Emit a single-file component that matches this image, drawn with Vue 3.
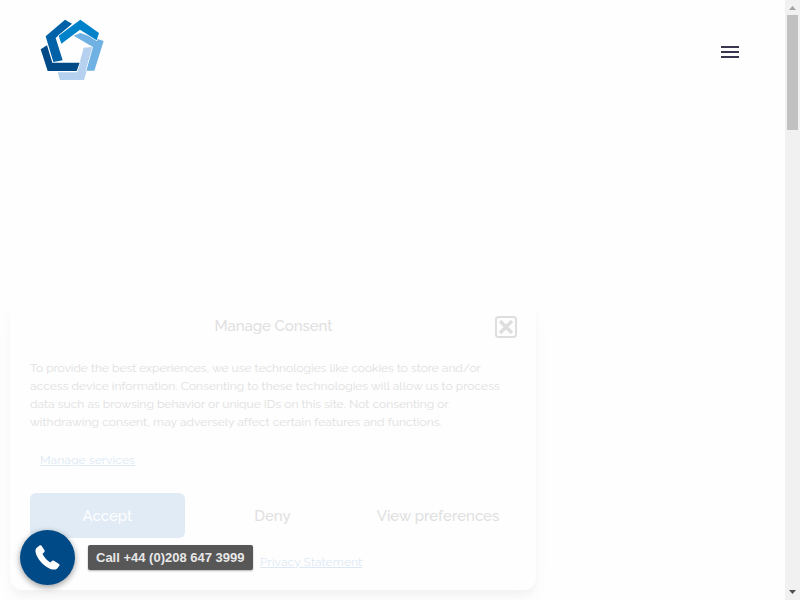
<template>
  <div class="page">
    <div class="content">
      <header class="header">
        <svg class="logo" viewBox="30 24 195 192" width="65" height="64">
          <polygon fill="#b5d1ef" points="161,113 192,110 162,210 90,210 83,187 141,187" />
          <polygon fill="#6fb1e2" stroke="#fefefe" stroke-width="4" paint-order="stroke" points="131,77 151,69 221,93 193,182 169,182 189,111" />
          <polygon fill="#0061a8" points="47,79 105,29 126,41 77,84 98,151 70,156" />
          <polygon fill="#004b87" stroke="#fefefe" stroke-width="4" paint-order="stroke" points="32,118 51,106 67,158 149,158 140,183 53,183" />
          <polygon fill="#0082ca" stroke="#fefefe" stroke-width="4" paint-order="stroke" points="86,77 151,29 207,69 200,91 150,59 94,101" />
        </svg>
        <button class="menu" aria-label="Menu">
          <span></span>
          <span></span>
          <span></span>
        </button>
      </header>

      <section class="consent">
        <div class="consent-head">
          <h2>Manage Consent</h2>
          <svg class="close" viewBox="0 0 22 22" width="22" height="22">
            <rect x="1" y="1" width="20" height="20" rx="2.5" />
            <path d="M5 5L17 17M17 5L5 17" />
          </svg>
        </div>
        <p class="message">
          <span v-for="(line, i) in lines" :key="i" :class="'line-' + (i + 1)">{{ line }}</span>
        </p>
        <a class="link services">Manage services</a>
        <div class="buttons">
          <button class="btn accept">Accept</button>
          <button class="btn deny">Deny</button>
          <button class="btn prefs">View preferences</button>
        </div>
        <div class="documents">
          <a class="link privacy">Privacy Statement</a>
        </div>
      </section>

      <div class="call">
        <div class="call-button">
          <svg viewBox="0 0 24 24" width="25" height="25">
            <path d="M1.4 2.8L4.7 .3Q5.6 -.2 6.3 .8L9.1 5.1Q9.7 6.1 8.8 6.9L7.2 8.3Q9.5 13.5 14.8 16.7L16.5 15.2Q17.3 14.5 18.2 15.2L23 18.3Q23.9 18.9 23.4 19.9L21.1 22.8Q18.7 24.5 14.3 22.7C7.2 19.5 1.5 12.5 .5 6.5Q.2 4.1 1.4 2.8Z" />
          </svg>
        </div>
        <span class="call-label">Call +44 (0)208 647 3999</span>
      </div>
    </div>

    <div class="scrollbar">
      <svg viewBox="0 0 15 15" width="15" height="15">
        <path fill="#a3a3a3" d="M4 10L7.5 6L11 10Z" />
      </svg>
      <div class="thumb"></div>
      <svg class="down" viewBox="0 0 15 15" width="15" height="15">
        <path fill="#505050" d="M4 5L11 5L7.5 9Z" />
      </svg>
    </div>
  </div>
</template>

<script setup>
const lines = [
  'To provide the best experiences, we use technologies like cookies to store and/or',
  'access device information. Consenting to these technologies will allow us to process',
  'data such as browsing behavior or unique IDs on this site. Not consenting or',
  'withdrawing consent, may adversely affect certain features and functions.'
]
</script>

<style>
body {
  overflow: hidden;
}
</style>

<style scoped>
.page {
  display: flex;
  width: 800px;
  height: 600px;
  overflow: hidden;
  background: #fefefe;
  font-family: Raleway, Lato, sans-serif;
}

.content {
  position: relative;
  flex: 1;
  overflow: hidden;
}

.header {
  display: flex;
  justify-content: space-between;
  align-items: flex-start;
  padding: 18px 46px 0 40px;
}

.menu {
  display: flex;
  flex-direction: column;
  gap: 3px;
  margin-top: 28px;
  padding: 0;
  border: 0;
  background: none;
}

.menu span {
  width: 18px;
  height: 2px;
  background: #393750;
}

.consent {
  position: absolute;
  left: 10px;
  top: 300px;
  box-sizing: border-box;
  width: 526px;
  height: 290px;
  padding: 16px 19px 16px 20px;
  border-radius: 12px;
  background: #fefefe;
  box-shadow: 0 10px 20px rgba(0, 0, 0, 0.023), 0 6px 6px rgba(0, 0, 0, 0.028);
}

.consent-head {
  display: grid;
  grid-template-columns: 22px 1fr 22px;
  align-items: center;
  height: 22px;
}

.consent-head h2 {
  grid-column: 2;
  margin: -2px 0 0;
  color: #e0e0e0;
  font-size: 15px;
  font-weight: 500;
  line-height: 20px;
  text-align: center;
  letter-spacing: -0.06px;
}

.close {
  fill: none;
  stroke: #dedede;
  stroke-width: 2;
}

.close path {
  stroke-width: 3.5;
}

.message {
  margin: 21px 0 0;
  color: #e0e0e0;
  font-size: 12px;
  line-height: 18px;
}

.message span {
  display: block;
  white-space: nowrap;
}

.line-1 {
  letter-spacing: -0.015px;
}

.line-2 {
  letter-spacing: 0.04px;
}

.line-3 {
  letter-spacing: 0.025px;
}

.line-4 {
  letter-spacing: 0.075px;
}

.link {
  color: #dce9f5;
  font-size: 12px;
  line-height: 18px;
  text-decoration: underline;
  letter-spacing: 0.1px;
}

.services {
  display: block;
  width: max-content;
  margin: 20px 0 0 10px;
}

.buttons {
  display: grid;
  grid-template-columns: repeat(3, 155px);
  gap: 10px;
  margin-top: 24px;
}

.btn {
  height: 45px;
  padding: 0;
  border: 0;
  border-radius: 6px;
  background: #fefefe;
  color: #e0e0e0;
  font-family: inherit;
  font-size: 15px;
  font-weight: 500;
}

.accept {
  background: #e0ebf5;
  color: #fefefe;
}

.prefs {
  padding-left: 1px;
}

.documents {
  margin: 14px 0 0 230px;
  line-height: 18px;
}

.call {
  position: absolute;
  left: 20px;
  top: 530px;
  display: flex;
  align-items: center;
  gap: 13px;
}

.call-button {
  display: flex;
  align-items: center;
  justify-content: center;
  width: 55px;
  height: 55px;
  border-radius: 50%;
  background: #004b87;
  box-shadow: 0 2px 6px rgba(0, 0, 0, 0.4);
}

.call-button path {
  fill: #fff;
}

.call-label {
  box-sizing: border-box;
  width: 165px;
  height: 25px;
  padding-left: 8px;
  border-radius: 2px;
  background: #575757;
  box-shadow: 0 1px 2px rgba(0, 0, 0, 0.3);
  color: #e8e8e8;
  font: bold 13px/25px "Liberation Sans", Arial, sans-serif;
  white-space: nowrap;
}

.scrollbar {
  display: flex;
  flex-direction: column;
  width: 15px;
  background: #f1f1f1;
}

.scrollbar svg {
  flex: none;
}

.thumb {
  width: 11px;
  height: 115px;
  margin-left: 2px;
  background: #c1c1c1;
}

.down {
  margin-top: auto;
}
</style>
